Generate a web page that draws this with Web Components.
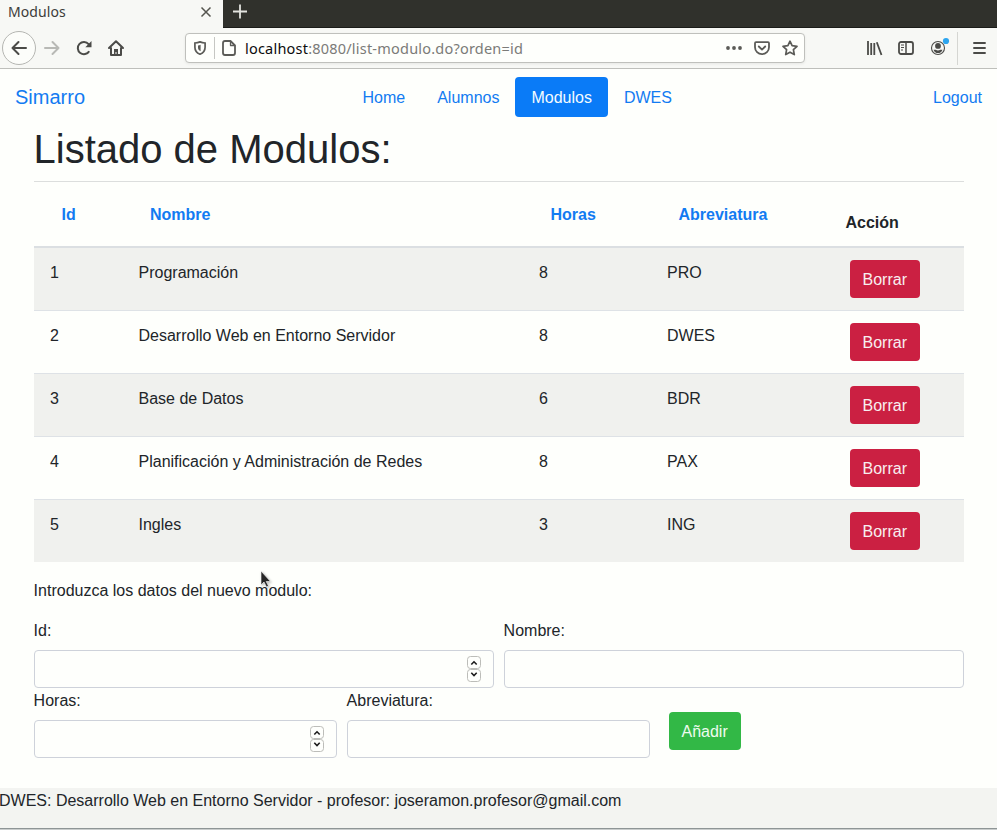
<!DOCTYPE html>
<html lang="es">
<head>
<meta charset="utf-8">
<title>Modulos</title>
<style>
html,body{margin:0;height:100%;overflow:hidden}
body{background:#fefffc;color:#212529;font:16px/24px "Liberation Sans",Arial,sans-serif}
</style>
</head>
<body>
<modulos-app></modulos-app>
<script>
const define = (name, css, html) => customElements.define(name, class extends HTMLElement {
  constructor() {
    super();
    const root = this.attachShadow({ mode: "open" });
    const t = document.createElement("template");
    t.innerHTML = `<style>*{box-sizing:border-box}${css}</style>${typeof html === "function" ? html(this) : html}`;
    root.append(t.content.cloneNode(true));
  }
});

define("tab-strip", `
:host{display:flex;height:28px;background:#30312c;border-bottom:1px solid #1b1c19;font-family:"Noto Sans",sans-serif;font-size:14px;color:#3c3c3a}
.tab{width:223px;height:28px;background:#f7f8f5;display:flex;align-items:center;justify-content:space-between;padding:0 11px 4px 8px}
.tab span{letter-spacing:.1px}
svg{display:block}
.new{margin:4px 0 0 9px}`, `
<div class="tab"><span>Modulos</span>
<svg width="12" height="12" viewBox="0 0 12 12" fill="none" stroke="#55554f" stroke-width="1.5"><path d="M1.5 1.5l9 9M10.500 1.500l-9 9"/></svg></div>
<svg class="new" width="16" height="16" viewBox="0 0 16 16" stroke="#e3e4df" stroke-width="1.8"><path d="M8 .5v14M1 7.500h14"/></svg>`);

define("address-bar", `
:host{display:flex;align-items:center;width:620px;height:30px;background:#fefffc;border:1px solid #bfc0bc;border-radius:4px;box-shadow:0 1px 3px #0001;padding:0 6px 0 6px;font:14.5px/28px "Noto Sans",sans-serif;color:#7b7b78}
svg{display:block;flex:none}
i{width:1px;height:22px;background:#c6c7c3;margin:0 6px 0 6px}
b{font-weight:400;color:#0c0c0d}
.u{flex:1;margin-left:8px;white-space:nowrap;letter-spacing:.21px}
.r{display:flex;gap:12px}`, `
<svg width="16" height="16" viewBox="0 0 16 16" fill="none" stroke="#5b5b57" stroke-width="1.7"><path d="M8 1.900c2 .8 3.500 1 5.100 1.100v4.200c0 3.400-2.100 5.800-5.100 7-3-1.200-5.100-3.600-5.100-7V3C4.500 2.900 6 2.700 8 1.900z"/><path d="M8.600 4.800c-.8.300-1.600.5-2.600.600v2c0 1.600.9 2.900 2.600 3.900z" fill="#5b5b57" stroke="none"/></svg>
<i></i>
<svg width="16" height="16" viewBox="0 0 16 16" fill="none" stroke="#5b5b57" stroke-width="1.8" stroke-linejoin="round"><path d="M4 1h5.500L14 5.500V13q0 2-2 2H4q-2 0-2-2V3q0-2 2-2z"/><path d="M9.500 1v4.500H14" stroke-width="1.300"/></svg>
<span class="u"><b>localhost</b>:8080/list-modulo.do?orden=id</span>
<div class="r">
<svg width="16" height="16" viewBox="0 0 16 16" fill="#5b5b57"><circle cx="2" cy="8" r="1.900"/><circle cx="8" cy="8" r="1.900"/><circle cx="14" cy="8" r="1.900"/></svg>
<svg width="16" height="16" viewBox="0 0 16 16" fill="none" stroke="#5b5b57" stroke-width="1.800" stroke-linecap="round" stroke-linejoin="round"><path d="M2 2.200h12q1 0 1 1v4a7 7 0 0 1-14 0v-4q0-1 1-1z"/><path d="M4.800 6.500L8 9.600l3.200-3.100"/></svg>
<svg width="16" height="16" viewBox="0 0 16 16" fill="none" stroke="#5b5b57" stroke-width="1.700" stroke-linejoin="round"><path d="M8 1.200l2.100 4.500 4.900.600-3.600 3.400.9 4.900L8 12.200l-4.300 2.400.9-4.900L1 6.300l4.900-.6z"/></svg>
</div>`);

define("tool-bar", `
:host{display:flex;align-items:center;height:41px;background:#f7f8f5;border-bottom:1px solid #bebfbb;padding:0 10px 0 2px}
.back{width:34px;height:34px;border-radius:50%;border:1px solid #b5b6b2;background:#fcfdfa;display:grid;place-items:center}
svg{display:block;flex:none;overflow:visible}
.nav{display:flex;gap:16px;margin-left:8px;width:141px}
.tools{display:flex;align-items:center;gap:16px;margin-left:61px}
.sep{width:1px;height:33px;background:#d5d6d2;margin-left:11px}
.menu{margin-left:13px}`, `
<div class="back"><svg width="16" height="16" viewBox="0 0 16 16" fill="none" stroke="#4b4b48" stroke-width="2" stroke-linecap="round" stroke-linejoin="round"><path d="M15 8H1.500M7.500 2l-6 6 6 6"/></svg></div>
<div class="nav">
<svg width="16" height="16" viewBox="0 0 16 16" fill="none" stroke="#b8b9b5" stroke-width="2" stroke-linecap="round" stroke-linejoin="round"><path d="M1 8h13.500M8.500 2l6 6-6 6"/></svg>
<svg width="16" height="16" viewBox="0 0 16 16" fill="none" stroke="#4b4b48" stroke-width="2"><path d="M13.200 11.200A6.100 6.100 0 1 1 12.600 4.200L14 5.800"/><path d="M15.500 1v6.200H9.300z" fill="#4b4b48" stroke="none"/></svg>
<svg width="16" height="16" viewBox="0 0 16 16" fill="none" stroke="#4b4b48" stroke-width="2" stroke-linejoin="round" stroke-linecap="round"><path d="M1 8l7-6.700L15 8M3 8v7h10V8"/><path d="M6 14.500V9h4v5.500H8.500V12h-1v2.500z" fill="#4b4b48" stroke="none"/></svg>
</div>
<address-bar></address-bar>
<div class="tools">
<svg width="16" height="16" viewBox="0 0 16 16" fill="none" stroke="#4b4b48" stroke-width="1.800"><path d="M2 1v14M5.200 3v12M8.300 3v12M10.800 2.200L15.500 15"/></svg>
<svg width="16" height="16" viewBox="0 0 16 16" fill="none" stroke="#4b4b48" stroke-width="1.800"><rect x="1" y="2" width="14" height="12" rx="2"/><path d="M8 2v12" stroke-width="1.500"/><path d="M3 5h3M3 7.500h3M3 10h2" stroke-width="1"/></svg>
<svg width="16" height="16" viewBox="0 0 16 16" fill="#4b4b48"><circle cx="8" cy="8" r="6.500" fill="none" stroke="#4b4b48" stroke-width="1.100"/><circle cx="8" cy="5.900" r="2.900"/><path d="M3.500 9.700h2.200q2.300 1.400 4.600 0h2.200q-1.200 3.400-4.500 3.400T3.500 9.700z"/><circle cx="16" cy="1" r="3.100" fill="#2ca5ef"/></svg>
</div>
<span class="sep"></span>
<svg class="menu" width="16" height="16" viewBox="0 0 16 16" stroke="#4b4b48" stroke-width="1.900" stroke-linecap="round"><path d="M3 3h11M3 8h11M3 13h11"/></svg>`);

define("nav-link", `
:host{display:block;padding:9px 16px 7px;border-radius:4px;color:#127bf2}
:host([active]){background:#0a7bf7;color:#f4fbff}`, `<slot></slot>`);

define("site-nav", `
:host{display:flex;align-items:center;justify-content:space-between;height:56px;padding:0 15px;color:#127bf2}
.brand{font-size:20px;line-height:30px;width:331.500px}
.links{display:flex;flex:1}
.out{padding-top:2px}`, `
<span class="brand">Simarro</span>
<div class="links"><nav-link>Home</nav-link><nav-link>Alumnos</nav-link><nav-link active>Modulos</nav-link><nav-link>DWES</nav-link></div>
<span class="out">Logout</span>`);

define("action-button", `
:host{display:block;width:max-content;height:38px;padding:8px 13.300px 6px 12.500px;border-radius:4px;background:#cb2042;color:#f8eef0}
:host([kind=add]){background:#32b846;color:#eefbef}`, `<slot></slot>`);

define("table-row", `
:host{display:grid;grid-template-columns:88.500px 400.500px 128px 178.500px 1fr;height:63px;border-top:1px solid #dee2e6;padding-top:12px}
:host([first]){height:62px;border-top:0}
:host([odd]){background:#f0f1ee}
span{padding:1px 0 0 16px}
action-button{margin-left:20.500px}`, el => el.dataset.cells.split("|").map(c => `<span>${c}</span>`).join("") + `<action-button>Borrar</action-button>`);

define("module-table", `
:host{display:block}
.head{display:grid;grid-template-columns:88.500px 400.500px 128px 178.500px 1fr;height:66px;border-bottom:2px solid #dbdfe2;padding-top:21px;font-weight:700}
.head a{padding-left:27.500px;color:#127bf2}
.head span{padding:8px 0 0 16px}`, `
<div class="head"><a>Id</a><a>Nombre</a><a>Horas</a><a>Abreviatura</a><span>Acción</span></div>` +
["1|Programación|8|PRO","2|Desarrollo Web en Entorno Servidor|8|DWES","3|Base de Datos|6|BDR","4|Planificación y Administración de Redes|8|PAX","5|Ingles|3|ING"]
.map((r,i)=>`<table-row data-cells="${r}"${i?"":" first"}${i%2?"":" odd"}></table-row>`).join(""));

define("form-field", `
:host{display:block;padding-top:1px;text-indent:-.4px}
.box{height:38px;margin-top:7px;border:1px solid #ced2da;border-radius:4px;display:flex;align-items:center;justify-content:flex-end;padding-right:12px}
svg{display:none}
:host([number]) svg{display:block}`, `
<slot></slot><div class="box"><svg width="14" height="26" viewBox="0 0 14 26" fill="none"><g stroke="#bcbdb9"><rect x=".5" y=".5" width="13" height="12" rx="3"/><rect x=".5" y="13.500" width="13" height="12" rx="3"/></g><path d="M4.300 8.500L7 5.800l2.700 2.700M4.300 16.800L7 19.500l2.700-2.700" stroke="#1c1c1c" stroke-width="1.600"/></svg></div>`);

define("module-form", `
:host{display:block;position:relative;padding-top:17px}
p{margin:0 0 15px;text-indent:-.4px}
.row{display:flex;gap:10px}
.two form-field{flex:1}
.three form-field{width:303px}
action-button{margin:24px 0 0 9px}
.cursor{position:absolute;left:226px;top:8px;filter:drop-shadow(1px 1px 1px #0004)}`, `
<p>Introduzca los datos del nuevo modulo:</p>
<div class="row two"><form-field number>Id:</form-field><form-field>Nombre:</form-field></div>
<div class="row three"><form-field number>Horas:</form-field><form-field>Abreviatura:</form-field><action-button kind="add">Añadir</action-button></div>
<svg class="cursor" width="12" height="18" viewBox="0 0 12 18"><path d="M1 1v14l3-3 2.500 5 2-1-2.300-4.500H10.500z" fill="#262626" stroke="#fff" stroke-width=".6"/></svg>`);

define("modulos-app", `
:host{display:flex;flex-direction:column;height:830px;overflow:hidden}
main{padding:0 33px 0 34px;flex:1}
h1{font-size:40px;line-height:48px;font-weight:400;margin:0;height:57px;border-bottom:1px solid #dcdedd;text-indent:-.5px}
footer{height:42px;padding-top:1px;text-indent:-1px;background:#f3f4f1;box-shadow:inset 0 -1px #c9cdcd,inset 0 -2px #8e9596}`, `
<tab-strip></tab-strip><tool-bar></tool-bar><site-nav></site-nav>
<main><h1>Listado de Modulos:</h1><module-table></module-table><module-form></module-form></main>
<footer>DWES: Desarrollo Web en Entorno Servidor - profesor: joseramon.profesor@gmail.com</footer>`);
</script>
</body>
</html>
